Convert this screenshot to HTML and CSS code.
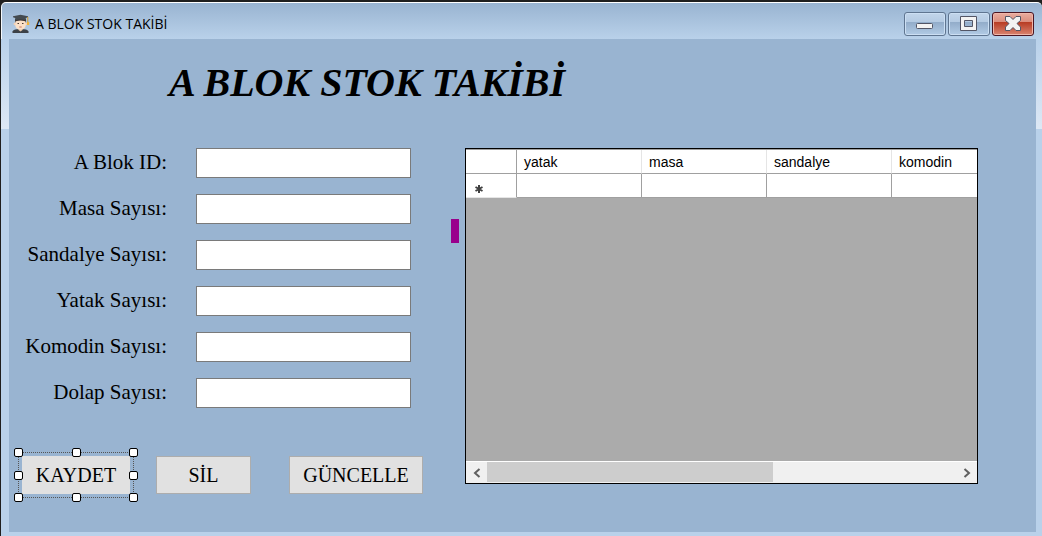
FILE: index.html
```html
<!DOCTYPE html>
<html lang="tr">
<head>
<meta charset="utf-8">
<title>A BLOK STOK TAKİBİ</title>
<link rel="stylesheet" href="styles.css">
</head>
<body>
<div class="window">
  <header class="titlebar">
    <svg class="app-icon" viewBox="0 0 18 20" aria-hidden="true">
      <path d="M0.500 19V17.500Q1 15.800 5 15.200H12Q16 15.800 16.500 17.500V19Z" fill="#3c4147"/>
      <path d="M6.500 14H10.500V16L8.500 17.500L6.500 16Z" fill="#e6c8aa"/>
      <path d="M3 5H14V9.500H3Z" fill="#3b3330"/>
      <circle cx="2.800" cy="10" r="1.200" fill="#f3d0b3"/>
      <circle cx="14.200" cy="10" r="1.200" fill="#f3d0b3"/>
      <path d="M3.200 8Q4 6.500 8.500 6.500Q13 6.500 13.800 8V11Q13.300 15.500 8.500 15.500Q3.700 15.500 3.200 11Z" fill="#fbe0c7"/>
      <path d="M5.500 9.500H7M10 9.500H11.500" stroke="#4b3c33"/>
      <path d="M7.300 13H9.700" stroke="#c9786a"/>
      <path d="M1 2.200L8.500 0.800L16 2.200V3.200L13.800 4V6.500Q8.500 4.500 3.200 6.500V4L1 3.200Z" fill="#444b50"/>
      <path d="M15.800 3V8" stroke="#d69a27"/>
      <path d="M15 8H17.200V11H15Z" fill="#efb33a"/>
    </svg>
    <span class="caption">A BLOK STOK TAKİBİ</span>
    <div class="window-buttons">
      <button class="window-button" type="button" aria-label="Simge durumuna küçült">
        <svg viewBox="0 0 18 16"><rect x="0.500" y="7.500" width="16" height="5" rx="1" fill="#f3f3f3" stroke="#535666"/></svg>
      </button>
      <button class="window-button" type="button" aria-label="Ekranı kapla">
        <svg viewBox="0 0 18 16"><path d="M0.500 0.500H16.500V14.500H0.500ZM4.500 4.500V10.500H12.500V4.500Z" fill="#f3f3f3" stroke="#535666" fill-rule="evenodd"/></svg>
      </button>
      <button class="window-button window-button-close" type="button" aria-label="Kapat">
        <svg viewBox="0 0 18 16"><path d="M1.500 0.500H6L9 3.500L12 0.500H16.500V4.500L13 7.500L16.500 11V14.500H12L9 11.500L6 14.500H1.500V11L5 7.500L1.500 4.500Z" fill="#f3f3f3" stroke="#535666" stroke-linejoin="round"/></svg>
      </button>
    </div>
  </header>
  <main class="form">
    <h1 class="heading">A BLOK STOK TAKİBİ</h1>
    <div class="content">
      <div class="entry">
        <div class="fields">
          <label for="blok">A Blok ID:</label><input id="blok" type="text">
          <label for="masa">Masa Sayısı:</label><input id="masa" type="text">
          <label for="sandalye">Sandalye Sayısı:</label><input id="sandalye" type="text">
          <label for="yatak">Yatak Sayısı:</label><input id="yatak" type="text">
          <label for="komodin">Komodin Sayısı:</label><input id="komodin" type="text">
          <label for="dolap">Dolap Sayısı:</label><input id="dolap" type="text">
        </div>
        <div class="actions">
          <div class="selected">
            <button class="action action-save" type="button">KAYDET</button>
            <i class="handle top left"></i><i class="handle top center"></i><i class="handle top right"></i>
            <i class="handle middle left"></i><i class="handle middle right"></i>
            <i class="handle bottom left"></i><i class="handle bottom center"></i><i class="handle bottom right"></i>
          </div>
          <button class="action action-delete" type="button">SİL</button>
          <button class="action action-update" type="button">GÜNCELLE</button>
        </div>
      </div>
      <div class="marker"></div>
      <section class="grid" aria-label="Stok listesi">
        <div class="grid-view">
          <table class="stock">
            <colgroup><col class="col-head"><col><col><col><col></colgroup>
            <thead><tr><th></th><th scope="col">yatak</th><th scope="col">masa</th><th scope="col">sandalye</th><th scope="col">komodin</th></tr></thead>
            <tbody><tr><th scope="row"><svg class="new-row" viewBox="0 0 8 8" role="img" aria-label="Yeni satır"><path d="M4 0V8M0.500 2L7.500 6M7.500 2L0.500 6" stroke="#404040" stroke-width="2"/></svg></th><td></td><td></td><td></td><td></td></tr></tbody>
          </table>
        </div>
        <div class="scrollbar">
          <button class="scroll-arrow" type="button" aria-label="Sola kaydır"><svg viewBox="0 0 8 10"><path d="M6.500 1L2 5L6.500 9" fill="none" stroke="#606060" stroke-width="2"/></svg></button>
          <div class="track"><div class="thumb"></div></div>
          <button class="scroll-arrow" type="button" aria-label="Sağa kaydır"><svg viewBox="0 0 8 10"><path d="M1.500 1L6 5L1.500 9" fill="none" stroke="#606060" stroke-width="2"/></svg></button>
        </div>
      </section>
    </div>
  </main>
</div>
</body>
</html>
```

FILE: styles.css
```css
* { box-sizing: border-box; }
body { margin: 0; background: #1f1f1f; }
button { font: inherit; color: #000; padding: 0; }

.window {
  display: flex;
  flex-direction: column;
  min-height: 100vh;
  padding: 2px 0 0 1px;
}
.titlebar {
  display: flex;
  align-items: center;
  height: 37px;
  padding: 6px 8px 0 10px;
  border-top: 1px solid #fff;
  border-left: 1px solid #f4f8fc;
  border-radius: 5px 5px 0 0;
  background: linear-gradient(#99b4d1, #b9d1ea);
}
.app-icon { width: 18px; height: 20px; }
.caption {
  flex: 1;
  margin-left: 5px;
  font: 14px/22px "Open Sans", "Noto Sans", sans-serif;
}
.window-buttons { display: flex; gap: 2px; }
.window-button {
  display: grid;
  place-items: center;
  width: 42px;
  height: 24px;
  border: 1px solid #5f7590;
  border-radius: 3px;
  background: linear-gradient(#c2d5ea, #b4cae2 42%, #93adca 43%, #b2cbe5);
  box-shadow: inset 0 0 0 1px #ccdff3;
}
.window-button svg { width: 18px; height: 16px; }
.window-button-close {
  border-color: #4b1522;
  background: linear-gradient(#e9ada0, #da8c7c 42%, #b83d25 43%, #d98470);
  box-shadow: inset 0 0 0 1px #efb6a9;
}

.form {
  flex: 1;
  padding: 24px 58px 34px 0;
  border: solid transparent;
  border-width: 0 6px 4px 8px;
  background:
    linear-gradient(#99b4d1, #99b4d1) padding-box,
    linear-gradient(#b9d1ea, #dde8f5) 0 0 / 100% 90px no-repeat border-box,
    #b9d1ea;
}
.heading {
  margin: 0 0 45px 160px;
  font: italic bold 40px/40px "Liberation Serif", serif;
}
.content { display: flex; }
.fields {
  display: grid;
  grid-template-columns: 158px 215px;
  column-gap: 29px;
  row-gap: 16px;
}
.fields label {
  font: 21px/28px "Liberation Serif", serif;
  text-align: right;
  white-space: nowrap;
}
.fields input {
  width: 100%;
  height: 30px;
  padding: 2px 4px;
  border: 1px solid #7a7a7a;
  border-radius: 0;
  background: #fff;
  font: 20px "Liberation Serif", serif;
}
.actions {
  display: flex;
  align-items: center;
  margin: 44px 0 0 9px;
}
.selected {
  position: relative;
  padding: 3px;
  border: 1px dotted #555;
}
.handle {
  position: absolute;
  width: 9px;
  height: 9px;
  border: 1px solid #000;
  border-radius: 2px;
  background: #fff;
}
.top { top: -5px; }
.middle { top: calc(50% - 4px); }
.bottom { bottom: -5px; }
.left { left: -5px; }
.center { left: calc(50% - 4px); }
.right { right: -5px; }
.action {
  display: block;
  height: 38px;
  border: 1px solid #adadad;
  background: #e1e1e1;
  font: 20px/24px "Liberation Serif", serif;
}
.action-save { width: 108px; border-color: #e1e1e1; }
.action-delete { width: 95px; margin-left: 22px; }
.action-update { width: 134px; margin-left: 38px; }

.marker {
  flex: none;
  width: 8px;
  height: 24px;
  margin: 71px 6px 0 28px;
  background: #99008c;
}
.grid {
  display: flex;
  flex: 1;
  flex-direction: column;
  min-width: 0;
  min-height: 336px;
  align-self: flex-start;
  border: 1px solid #000;
  background: #ababab;
}
.grid-view { flex: 1; overflow: hidden; }
.stock {
  width: 551px;
  table-layout: fixed;
  border-spacing: 0;
  border-top: 1px solid #a0a0a0;
  background: #fff;
  font: 14px/16px "Liberation Sans", sans-serif;
}
.col-head { width: 51px; }
.stock th, .stock td {
  height: 24px;
  padding: 0 7px;
  border: solid #a0a0a0;
  border-width: 0 1px 1px 0;
  font-weight: 400;
  text-align: left;
}
.stock thead th + th { border-right-color: #e5e5e5; }
.stock tbody th { border-bottom-color: #e5e5e5; }
.new-row { display: block; width: 8px; height: 8px; margin: 6px 0 0 2px; }
.scrollbar {
  display: flex;
  height: 22px;
  border-top: 1px solid #fff;
  background: #f0f0f0;
}
.scroll-arrow {
  display: grid;
  place-items: center;
  width: 21px;
  border: 0;
  background: none;
}
.scroll-arrow svg { width: 8px; height: 10px; }
.track { flex: 1; padding-bottom: 1px; }
.thumb { width: 61%; height: 100%; background: #cdcdcd; }
```
